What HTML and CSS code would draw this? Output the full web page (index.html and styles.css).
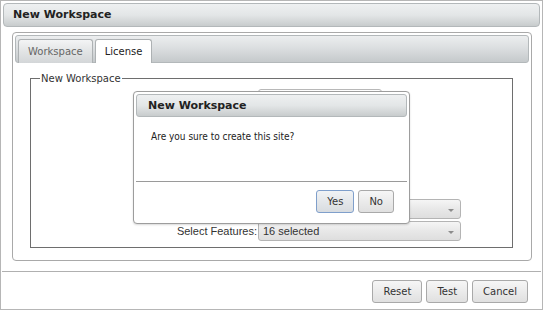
FILE: index.html
```html
<html>
<head>
<title>New Workspace</title>
<link rel="stylesheet" href="styles.css">
<meta http-equiv="Content-Type" content="text/html; charset=UTF-8">
</head>
<body>
<div class="window">
  <div class="window-title">New Workspace</div>
  <div class="window-body">
    <div class="tab-panel">
      <div class="tab-strip">
        <span class="tab">Workspace</span>
        <span class="tab tab-active">License</span>
      </div>
      <div class="tab-body">
        <fieldset class="group">
          <legend>New Workspace</legend>
          <div class="form-row"><span class="form-label"></span><span class="text-input"></span></div>
          <div class="form-row"><span class="form-label"></span><span class="text-input"></span></div>
          <div class="form-row"><span class="form-label"></span><span class="text-input"></span></div>
          <div class="form-row"><span class="form-label"></span><span class="text-input"></span></div>
          <div class="form-row"><span class="form-label"></span><span class="text-input"></span></div>
          <div class="form-row"><span class="form-label"></span><span class="select-box"><span class="select-text"></span><span class="select-arrow"></span></span></div>
          <div class="form-row"><span class="form-label">Select Features:</span><span class="select-box"><span class="select-text">16 selected</span><span class="select-arrow"></span></span></div>
        </fieldset>
      </div>
    </div>
  </div>
  <div class="window-footer">
    <span class="button">Reset</span>
    <span class="button">Test</span>
    <span class="button">Cancel</span>
  </div>

  <div class="dialog">
    <div class="dialog-title">New Workspace</div>
    <div class="dialog-message">Are you sure to create this site?</div>
    <div class="dialog-footer">
      <span class="button button-focus">Yes</span>
      <span class="button">No</span>
    </div>
  </div>
</div>
</body>
</html>
```

FILE: styles.css
```css
body {
 margin: 0;
 font-family: "DejaVu Sans", Verdana, sans-serif;
 font-size: 10px;
 color: #333333;
 background-color: #ffffff;
}
.window {
 position: relative;
 width: 543px;
 height: 310px;
 box-sizing: border-box;
 border: 1px solid #b6b6b6;
 display: flex;
 flex-direction: column;
}
.window-title {
 margin: 2px 2px 0 2px;
 height: 24px;
 box-sizing: border-box;
 border: 1px solid #b3b8ba;
 border-radius: 4px;
 background: linear-gradient(#eef0f1, #e3e6e7 50%, #c8cccd);
 padding-left: 9px;
 line-height: 22px;
 font-size: 11px;
 font-weight: bold;
 color: #222222;
}
.window-body {
 flex: 1;
 display: flex;
 padding: 5px 10px 10px 11px;
}
.tab-panel {
 flex: 1;
 display: flex;
 flex-direction: column;
 border: 1px solid #a9a9a9;
 border-radius: 4px;
 padding: 2px;
}
.tab-strip {
 height: 28px;
 box-sizing: border-box;
 display: flex;
 align-items: flex-end;
 gap: 2px;
 padding-left: 2px;
 border: 1px solid #b3b8ba;
 border-radius: 3px;
 background: linear-gradient(#eceeef, #dadddf 50%, #c5c9cb);
}
.tab {
 height: 24px;
 box-sizing: border-box;
 margin-bottom: -1px;
 padding: 0 9px;
 line-height: 23px;
 border: 1px solid #adb1b3;
 border-bottom: none;
 border-radius: 3px 3px 0 0;
 background: linear-gradient(#f3f4f5, #e2e4e5 50%, #d3d6d8);
 color: #666666;
}
.tab-active {
 background: #ffffff;
 color: #222222;
}
.tab-body {
 flex: 1;
 padding: 9px 16px 10px 15px;
}
.group {
 margin: 0;
 padding: 4px 10px 6px 9px;
 border: 1px solid #6e6e6e;
 display: flex;
 flex-direction: column;
 gap: 2px;
}
.group legend {
 padding: 0 1px;
 line-height: 13px;
 color: #333333;
}
.form-row {
 display: flex;
 height: 20px;
}
.form-label {
 width: 217px;
 margin-right: 1px;
 text-align: right;
 font-family: "Liberation Sans", Arial, sans-serif;
 font-size: 11px;
 line-height: 20px;
 color: #333333;
}
.text-input {
 width: 124px;
 box-sizing: border-box;
 border: 1px solid #b8b8b8;
 border-radius: 3px;
 background-color: #ffffff;
}
.select-box {
 width: 203px;
 box-sizing: border-box;
 display: flex;
 align-items: center;
 padding: 0 6px 0 4px;
 border: 1px solid #b4b4b4;
 border-radius: 3px;
 background: linear-gradient(#f5f5f5, #e8e8e8 50%, #dedede);
}
.select-text {
 flex: 1;
 font-family: "Liberation Sans", Arial, sans-serif;
 font-size: 11px;
 color: #333333;
}
.select-arrow {
 width: 0;
 height: 0;
 margin-top: 2px;
 border-left: 3px solid transparent;
 border-right: 3px solid transparent;
 border-top: 3px solid #8c8c8c;
}
.window-footer {
 display: flex;
 justify-content: flex-end;
 gap: 4px;
 margin: 0 1px;
 padding: 8px 13px 6px 0;
 border-top: 1px solid #b0b0b0;
}
.button {
 height: 23px;
 box-sizing: border-box;
 padding: 0 10px;
 line-height: 21px;
 border: 1px solid #a9a9a9;
 border-radius: 3px;
 background: linear-gradient(#f6f6f6, #ebebeb 50%, #e0e0e0);
 color: #333333;
}
.button-focus {
 border-color: #7f9fcb;
 background: linear-gradient(#f1f3f5, #e4e7ea 50%, #d8dce0);
}
.dialog {
 position: absolute;
 left: 132px;
 top: 90px;
 width: 277px;
 height: 133px;
 box-sizing: border-box;
 display: flex;
 flex-direction: column;
 padding: 2px;
 border: 1px solid #9d9d9d;
 border-radius: 4px;
 background-color: #ffffff;
 box-shadow: 0 1px 2px rgba(0,0,0,0.15);
}
.dialog-title {
 height: 23px;
 box-sizing: border-box;
 padding-left: 11px;
 line-height: 21px;
 border: 1px solid #b3b8ba;
 border-radius: 3px;
 background: linear-gradient(#eef0f1, #e3e6e7 50%, #c8cccd);
 font-size: 11px;
 font-weight: bold;
 color: #222222;
}
.dialog-message {
 height: 64px;
 box-sizing: border-box;
 padding: 14px 0 0 15px;
 line-height: 12px;
 font-family: "DejaVu Sans Condensed", "DejaVu Sans", sans-serif;
 font-stretch: condensed;
 color: #222222;
}
.dialog-footer {
 display: flex;
 justify-content: flex-end;
 gap: 4px;
 padding: 8px 13px 0 0;
 border-top: 1px solid #9a9a9a;
}
```
